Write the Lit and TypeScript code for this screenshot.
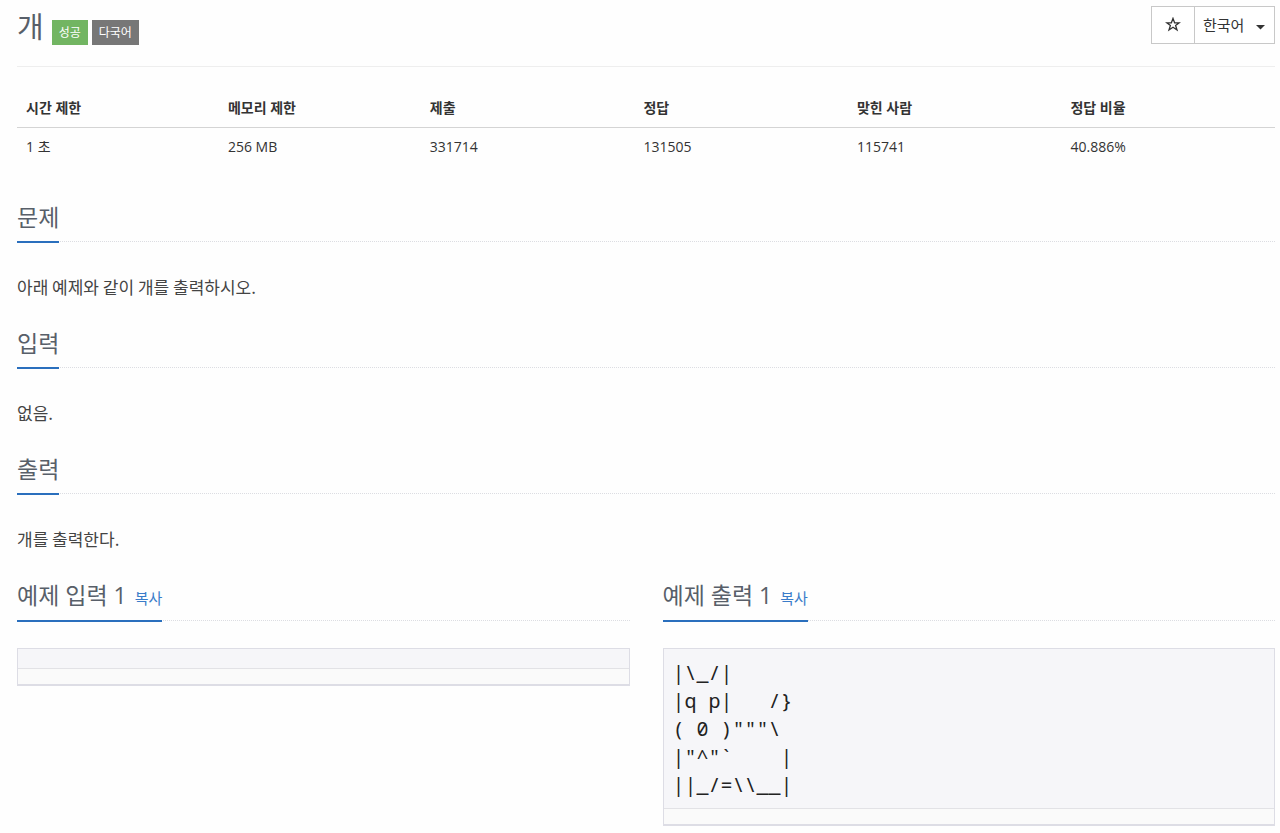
import { LitElement, html, css } from "lit";
import { customElement, property } from "lit/decorators.js";

const headline = css`
  .headline {
    border-bottom: 1px dotted #dcdde2;
    margin-bottom: 26px;
  }
  .headline h2 {
    display: inline-block;
    box-sizing: border-box;
    height: 43px;
    margin: 0 0 -2px;
    border-bottom: 2px solid #2a6fbd;
    color: #585f69;
    font-size: 23px;
    font-weight: 400;
    line-height: 34px;
    vertical-align: top;
  }
`;

@customElement("problem-section")
class ProblemSection extends LitElement {
  @property() heading = "";

  static styles = [
    headline,
    css`
      :host {
        display: block;
      }
      .body {
        margin: 0;
        padding-bottom: 21px;
        color: #444;
        font-family: "Noto Sans CJK KR", sans-serif;
        font-size: 17px;
        line-height: 37px;
      }
    `,
  ];

  render() {
    return html`
      <section>
        <div class="headline"><h2>${this.heading}</h2></div>
        <p class="body"><slot></slot></p>
      </section>
    `;
  }
}

@customElement("sample-data")
class SampleData extends LitElement {
  @property() heading = "";
  @property() data = "";

  static styles = [
    headline,
    css`
      :host {
        display: block;
        min-width: 0;
      }
      .headline {
        margin-bottom: 27px;
      }
      .headline h2 {
        height: 44px;
      }
      .copy {
        margin: 0 0 0 2px;
        padding: 0;
        border: 0;
        background: none;
        color: #3a7cc9;
        font: inherit;
        font-size: 15px;
        line-height: 20px;
        cursor: pointer;
      }
      .box {
        border: 1px solid #dddde5;
        border-bottom-width: 2px;
        background: #fafafa;
        padding-bottom: 15px;
      }
      .data {
        margin: 0;
        padding: 10px 9px 9px;
        border-bottom: 1px solid #e2e2e6;
        background: #f6f6f9;
        color: #222;
        font-family: "Noto Sans Mono", "Source Code Pro", "DejaVu Sans Mono", monospace;
        font-size: 20px;
        line-height: 28px;
        overflow-x: auto;
      }
    `,
  ];

  private copy() {
    navigator.clipboard?.writeText(this.data);
  }

  render() {
    return html`
      <section>
        <div class="headline">
          <h2>${this.heading} <button class="copy" type="button" @click=${this.copy}>복사</button></h2>
        </div>
        <div class="box"><pre class="data">${this.data}</pre></div>
      </section>
    `;
  }
}

const LIMITS = [
  ["시간 제한", "1 초"],
  ["메모리 제한", "256 MB"],
  ["제출", "331714"],
  ["정답", "131505"],
  ["맞힌 사람", "115741"],
  ["정답 비율", "40.886%"],
];

const DOG = ["|\\_/|", "|q p|   /}", '( 0 )"""\\', '|"^"`    |', "||_/=\\\\__|"].join("\n");

@customElement("app-root")
class AppRoot extends LitElement {
  static styles = css`
    :host {
      display: block;
      min-height: 100vh;
      box-sizing: border-box;
      padding: 6px 5px 6px 17px;
      background: #fefefe;
      color: #333;
      font-family: "Open Sans", "Noto Sans CJK KR", sans-serif;
      font-size: 15px;
    }
    .top {
      display: flex;
      justify-content: space-between;
      align-items: flex-start;
      height: 60px;
      border-bottom: 1px solid #eee;
    }
    .title {
      display: flex;
      align-items: flex-end;
      gap: 4px;
      height: 39px;
    }
    .title h1 {
      margin: 0 4px 0 0;
      color: #585f69;
      font-size: 29px;
      font-weight: 400;
      line-height: 37px;
    }
    .label {
      padding: 0 7px;
      background: #777;
      color: #fff;
      font-size: 12px;
      line-height: 25px;
    }
    .label.success {
      background: #72b562;
    }
    .tools {
      display: flex;
      box-sizing: border-box;
      height: 38px;
      border: 1px solid #c8c8c8;
      background: #fff;
    }
    .star {
      display: grid;
      place-items: center;
      width: 43px;
      padding: 0;
      border: 0;
      border-right: 1px solid #c8c8c8;
      background: none;
      color: #333;
    }
    .language {
      display: grid;
      align-items: center;
      width: 79px;
    }
    .language select,
    .language svg {
      grid-area: 1 / 1;
    }
    .language select {
      appearance: none;
      height: 100%;
      padding: 0 8px;
      border: 0;
      background: none;
      color: #333;
      font: inherit;
    }
    .language svg {
      justify-self: end;
      margin: 5px 9px 0 0;
      pointer-events: none;
    }
    table {
      width: 100%;
      margin: 22px 0 34px;
      table-layout: fixed;
      border-collapse: collapse;
      text-align: left;
    }
    th,
    td {
      width: 17%;
      padding: 0 9px;
    }
    th:nth-child(-n + 2) {
      width: 16%;
    }
    th {
      height: 38px;
      border-bottom: 1px solid #d4d4d4;
      font-size: 14px;
      font-weight: 700;
      line-height: 20px;
    }
    td {
      height: 38px;
      font-size: 14px;
      line-height: 20px;
    }
    .samples {
      display: grid;
      grid-template-columns: 1fr 1fr;
      gap: 33px;
    }
  `;

  render() {
    return html`
      <header class="top">
        <div class="title">
          <h1>개</h1>
          <span class="label success">성공</span>
          <span class="label">다국어</span>
        </div>
        <div class="tools">
          <button class="star" type="button" aria-label="즐겨찾기">
            <svg width="16" height="16" viewBox="0 0 16 16" fill="none" stroke="currentColor" stroke-width="1.3">
              <path d="M8 1.4 9.6 5.8H14.2L10.6 8.5 12 13 8 10.3 4 13 5.4 8.5 1.8 5.8H6.4Z" />
            </svg>
          </button>
          <label class="language">
            <select aria-label="언어">
              <option>한국어</option>
            </select>
            <svg width="9" height="5" viewBox="0 0 9 5" fill="#333"><path d="M0 0H9L4.5 4.5Z" /></svg>
          </label>
        </div>
      </header>
      <main>
        <table>
          <thead>
            <tr>${LIMITS.map(([name]) => html`<th scope="col">${name}</th>`)}</tr>
          </thead>
          <tbody>
            <tr>${LIMITS.map(([, value]) => html`<td>${value}</td>`)}</tr>
          </tbody>
        </table>
        <problem-section heading="문제">아래 예제와 같이 개를 출력하시오.</problem-section>
        <problem-section heading="입력">없음.</problem-section>
        <problem-section heading="출력">개를 출력한다.</problem-section>
        <div class="samples">
          <sample-data heading="예제 입력 1"></sample-data>
          <sample-data heading="예제 출력 1" .data=${DOG}></sample-data>
        </div>
      </main>
    `;
  }
}
